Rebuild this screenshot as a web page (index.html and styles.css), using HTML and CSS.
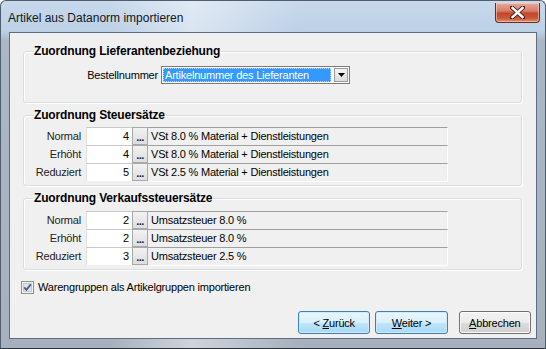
FILE: index.html
```html
<!DOCTYPE html>
<html lang="de">

<head>
    <meta charset="UTF-8">
    <title>Artikel aus Datanorm importieren</title>
    <link rel="stylesheet" href="styles.css">
</head>

<body>

    <div class="window">
        <div class="titlebar">
            <span class="title">Artikel aus Datanorm importieren</span>
            <div class="close">
                <svg width="15" height="13" viewBox="0 0 15 13">
                    <path d="M2 1.5 L13 11.5 M13 1.5 L2 11.5" stroke="#4a1a12" stroke-width="4.2" stroke-linecap="square" />
                    <path d="M2.5 2 L12.5 11 M12.5 2 L2.5 11" stroke="#fff" stroke-width="2.4" stroke-linecap="square" />
                </svg>
            </div>
        </div>

        <div class="client">
            <fieldset class="group group-supplier">
                <legend>Zuordnung Lieferantenbeziehung</legend>
                <div class="combo-row">
                    <span class="combo-label">Bestellnummer</span>
                    <div class="combo">
                        <span class="combo-text"><span class="combo-focus">Artikelnummer des Lieferanten</span></span>
                        <span class="combo-btn">
                            <svg width="7" height="4" viewBox="0 0 7 4"><path d="M0 0 H7 L3.5 4 Z" fill="#000" /></svg>
                        </span>
                    </div>
                </div>
            </fieldset>

            <fieldset class="group group-tax">
                <legend>Zuordnung Steuersätze</legend>
                <div class="rows">
                    <span class="row-label">Normal</span>
                    <span class="num">4</span>
                    <span class="pick">...</span>
                    <span class="desc">VSt 8.0 % Material + Dienstleistungen</span>

                    <span class="row-label">Erhöht</span>
                    <span class="num">4</span>
                    <span class="pick">...</span>
                    <span class="desc">VSt 8.0 % Material + Dienstleistungen</span>

                    <span class="row-label">Reduziert</span>
                    <span class="num">5</span>
                    <span class="pick">...</span>
                    <span class="desc">VSt 2.5 % Material + Dienstleistungen</span>
                </div>
            </fieldset>

            <fieldset class="group group-sales">
                <legend>Zuordnung Verkaufssteuersätze</legend>
                <div class="rows">
                    <span class="row-label">Normal</span>
                    <span class="num">2</span>
                    <span class="pick">...</span>
                    <span class="desc">Umsatzsteuer 8.0 %</span>

                    <span class="row-label">Erhöht</span>
                    <span class="num">2</span>
                    <span class="pick">...</span>
                    <span class="desc">Umsatzsteuer 8.0 %</span>

                    <span class="row-label">Reduziert</span>
                    <span class="num">3</span>
                    <span class="pick">...</span>
                    <span class="desc">Umsatzsteuer 2.5 %</span>
                </div>
            </fieldset>

            <div class="check-row">
                <span class="checkbox">
                    <svg width="13" height="13" viewBox="0 0 13 13">
                        <rect x="0.5" y="0.5" width="12" height="12" fill="#f4f4f4" stroke="#8e8f8f" />
                        <rect x="2.5" y="2.5" width="8" height="8" fill="#dfe3e8" stroke="#c2c8cf" />
                        <path d="M3.2 6.4 L5.4 8.8 L9.8 3.4" fill="none" stroke="#4a5f7c" stroke-width="1.8" />
                    </svg>
                </span>
                <span>Warengruppen als Artikelgruppen importieren</span>
            </div>

            <div class="buttons">
                <span class="btn btn-default"><span>&lt; <u>Z</u>urück</span></span>
                <span class="btn btn-default"><span><u>W</u>eiter &gt;</span></span>
                <span class="btn btn-cancel"><span><u>A</u>bbrechen</span></span>
            </div>
        </div>
    </div>

</body>

</html>
```

FILE: styles.css
```css
* {
    box-sizing: border-box;
}

body {
    margin: 0;
    background: #ffffff;
    font-family: "Liberation Sans", Arial, sans-serif;
    font-size: 11px;
    letter-spacing: -0.2px;
    color: #000;
}

.window {
    width: 546px;
    height: 349px;
    display: flex;
    flex-direction: column;
    padding: 0 8px 9px 8px;
    border-radius: 6px 6px 0 0;
    border: 1px solid #4f5d6e;
    border-bottom-color: #2f3338;
    background:
        linear-gradient(to right, rgba(255, 255, 255, 0) 20%, rgba(255, 255, 255, 0.45) 35%, rgba(255, 255, 255, 0) 55%),
        linear-gradient(to bottom, #c8d9ec 0, #bcd0e6 30px, #aab7c5 40px, #a6b1bd 100%);
}

/* Titelleiste */

.titlebar {
    height: 31px;
    display: flex;
    align-items: flex-start;
    justify-content: space-between;
    margin: 0 -1px;
}

.title {
    margin-top: 10px;
    font-size: 12px;
    letter-spacing: 0;
    color: #101820;
}

.close {
    width: 45px;
    height: 20px;
    margin-top: 2px;
    margin-right: -2px;
    border: 1px solid #6a2b20;
    border-top: none;
    border-radius: 0 0 4px 4px;
    display: flex;
    align-items: center;
    justify-content: center;
    background: linear-gradient(to bottom, #e9a99a 0, #d8806a 40%, #c3462d 55%, #c85a3c 80%, #e2906d 100%);
    box-shadow: inset 0 0 0 1px rgba(255, 220, 200, 0.55);
}

/* Inhalt */

.client {
    flex: 1;
    background: #f0f0f0;
    border: 1px solid #5d6d80;
    padding: 11px 0 0 13px;
    display: flex;
    flex-direction: column;
}

.group {
    width: 499px;
    margin: 0;
    padding: 0;
    border: 1px solid #d5dfe5;
    border-radius: 3px;
    box-shadow: inset 1px 1px 0 #fff, 1px 1px 0 #fff;
}

.group legend {
    margin-left: 9px;
    padding: 0 1px;
    font-weight: bold;
    font-size: 12px;
    line-height: 14px;
    letter-spacing: -0.15px;
    color: #000;
}

.group-supplier {
    padding: 8px 0 18px 0;
}

.group-tax {
    margin-top: 5px;
    padding: 5px 0 4px 0;
}

.group-sales {
    margin-top: 5px;
    padding: 6px 0 4px 0;
}

.combo-row {
    display: flex;
    align-items: center;
}

.combo-label {
    width: 134px;
    text-align: right;
    margin-right: 3px;
}

.combo {
    width: 189px;
    height: 18px;
    display: flex;
    border: 1px solid #7a7a7a;
    background: #fff;
    padding: 1px;
}

.combo-text {
    flex: 1;
    background: #3399ff;
    color: #fff;
    display: flex;
}

.combo-focus {
    flex: 1;
    border: 1px dotted #b0d4ff;
    line-height: 12px;
    padding-left: 1px;
}

.combo-btn {
    width: 14px;
    margin-left: 3px;
    border: 1px solid #9a9a9a;
    background: linear-gradient(to bottom, #f4f4f4, #dcdcdc);
    display: flex;
    align-items: center;
    justify-content: center;
}

.rows {
    display: grid;
    grid-template-columns: 57px 5px 46px 16px 300px;
    grid-auto-rows: 18px;
}

.row-label {
    text-align: right;
    line-height: 18px;
    color: #222;
}

.rows .num {
    grid-column: 3;
}

.num {
    background: #fff;
    border-top: 1px solid #c9c9c9;
    border-left: 1px solid #e2e2e2;
    text-align: right;
    padding-right: 3px;
    line-height: 16px;
}

.pick {
    background: linear-gradient(to bottom, #f2f2f2, #dedede);
    border: 1px solid #a9a9a9;
    color: #0c1c40;
    font-weight: bold;
    font-size: 11px;
    line-height: 18px;
    text-align: center;
    letter-spacing: -0.5px;
}

.desc {
    border-top: 1px solid #a0a0a0;
    border-right: 1px solid #fff;
    border-bottom: 1px solid #fff;
    margin-bottom: -1px;
    padding-left: 3px;
    line-height: 16px;
    white-space: nowrap;
}

/* Checkbox + Buttons */

.check-row {
    display: flex;
    align-items: center;
    gap: 4px;
    margin: 10px 0 0 -2px;
    height: 14px;
}

.checkbox {
    display: flex;
}

.buttons {
    display: flex;
    margin: 17px 0 0 275px;
}

.btn {
    width: 73px;
    height: 23px;
    border-radius: 3px;
    display: flex;
    align-items: center;
    justify-content: center;
    color: #000;
    margin-right: 5px;
    white-space: pre;
}

.btn u {
    text-decoration: underline;
}

.btn-default {
    border: 1px solid #3c7fb1;
    background: linear-gradient(to bottom, #eaf6fd 0, #d9f0fc 50%, #bee6fd 51%, #a7d9f5 100%);
    box-shadow: inset 0 0 0 1px #d0eaf9;
}

.btn-cancel {
    margin-left: 6px;
    border: 1px solid #707070;
    background: linear-gradient(to bottom, #f2f2f2 0, #ebebeb 50%, #dddddd 51%, #cfcfcf 100%);
    box-shadow: inset 0 0 0 1px #fcfcfc;
}
```
